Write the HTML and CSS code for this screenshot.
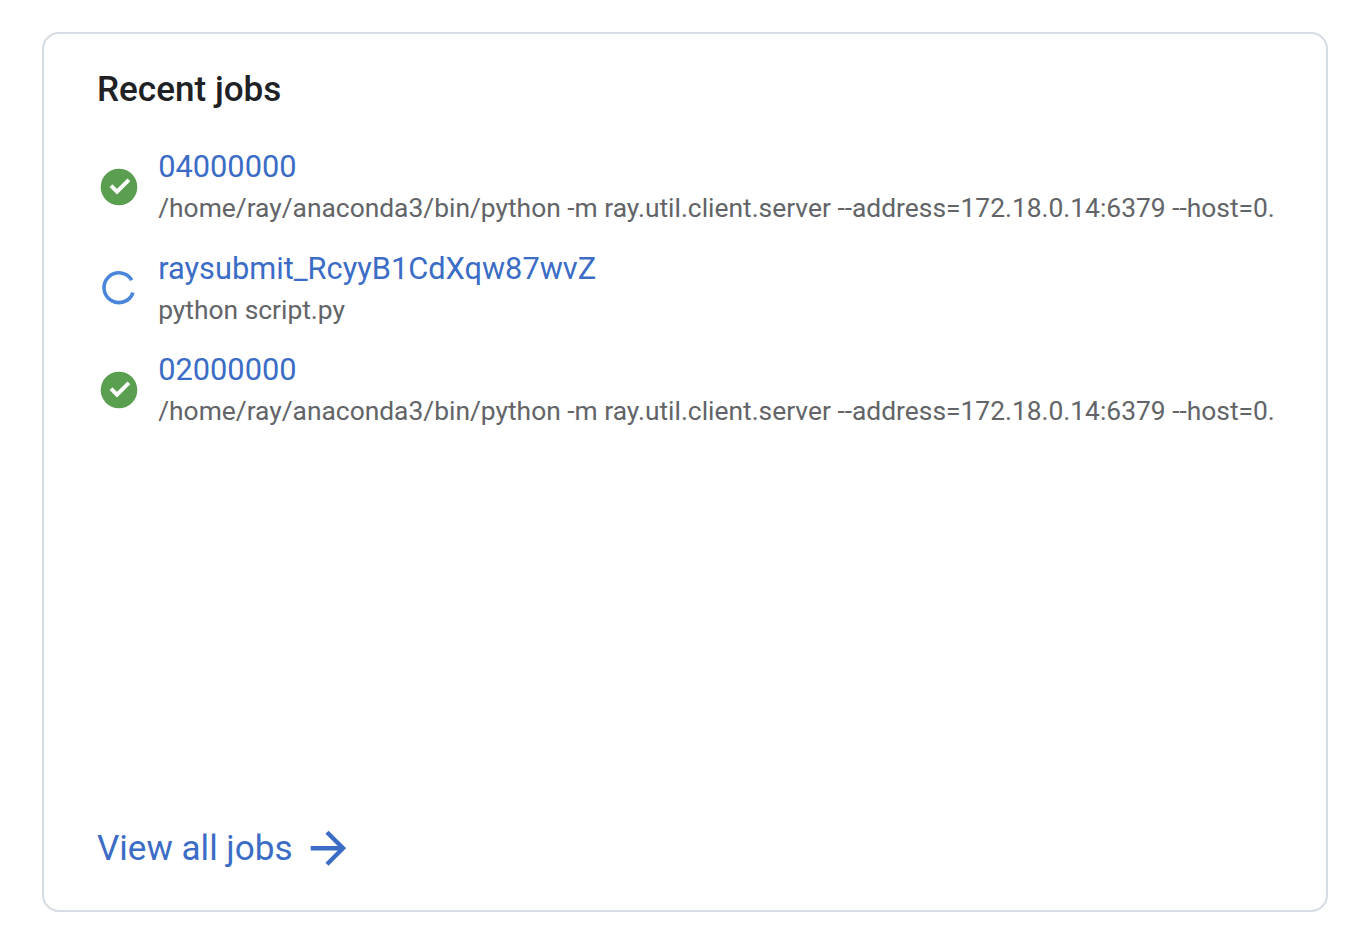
FILE: index.html
```html
<!DOCTYPE html>
<html lang="en">
<head>
<meta charset="utf-8">
<title>Recent jobs</title>
<link rel="stylesheet" href="styles.css">
</head>
<body>
<section class="card">
  <h1 class="title">Recent jobs</h1>
  <ul class="jobs">
    <li class="job">
      <svg class="icon" viewBox="0 0 44 44"><circle cx="22" cy="22" r="18.3" fill="#5a9f50"/><path d="M14 20.700l6 6L31.900 14.800" fill="none" stroke="#fff" stroke-width="3.9"/></svg>
      <div class="info"><a class="link">04000000</a><p class="command">/home/ray/anaconda3/bin/python -m ray.util.client.server --address=172.18.0.14:6379 --host=0.</p></div>
    </li>
    <li class="job">
      <svg class="icon" viewBox="0 0 44 44"><path d="M34.800 14.200A14.900 14.900 0 1 0 36 26.600" fill="none" stroke="#4a86dc" stroke-width="3.6"/></svg>
      <div class="info"><a class="link">raysubmit_RcyyB1CdXqw87wvZ</a><p class="command">python script.py</p></div>
    </li>
    <li class="job">
      <svg class="icon" viewBox="0 0 44 44"><circle cx="22" cy="22" r="18.3" fill="#5a9f50"/><path d="M14 20.700l6 6L31.900 14.800" fill="none" stroke="#fff" stroke-width="3.9"/></svg>
      <div class="info"><a class="link">02000000</a><p class="command">/home/ray/anaconda3/bin/python -m ray.util.client.server --address=172.18.0.14:6379 --host=0.</p></div>
    </li>
  </ul>
  <a class="all"><span class="label">View all jobs</span><svg class="arrow" viewBox="0 0 36 36"><path d="M.7 18.200H33M17 2.200l16 16-16 16" fill="none" stroke="#3b6cc6" stroke-width="4.4"/></svg></a>
</section>
</body>
</html>
```
FILE: styles.css
```css
* { box-sizing: border-box; }
body { margin: 0; padding: 32px 32px 38px 42px; height: 950px; background: #fff; font-family: Roboto, sans-serif; }
.card { display: flex; flex-direction: column; width: 1286px; height: 880px; padding: 34px 51px 39px 53px; border: 2px solid #d5dce3; border-radius: 17px; }
.title { margin: 0; font-size: 35.1px; line-height: 42px; font-weight: 500; color: #202124; }
.jobs { display: flex; flex-direction: column; gap: 18px; margin: 35px 0 0; padding: 0; list-style: none; }
.job { display: flex; align-items: center; gap: 17.2px; height: 83.5px; }
.icon { width: 44px; height: 44px; flex: none; }
.info { padding-top: 2px; white-space: nowrap; }
.link { display: block; font-size: 30.77px; line-height: 42px; color: #3b6cc6; }
.command { margin: 0; font-size: 26.39px; line-height: 41px; color: #626468; }
.all { display: flex; align-items: center; gap: 17px; margin-top: auto; font-size: 35.1px; line-height: 46px; color: #3b6cc6; }
.arrow { width: 36px; height: 36px; }
```
